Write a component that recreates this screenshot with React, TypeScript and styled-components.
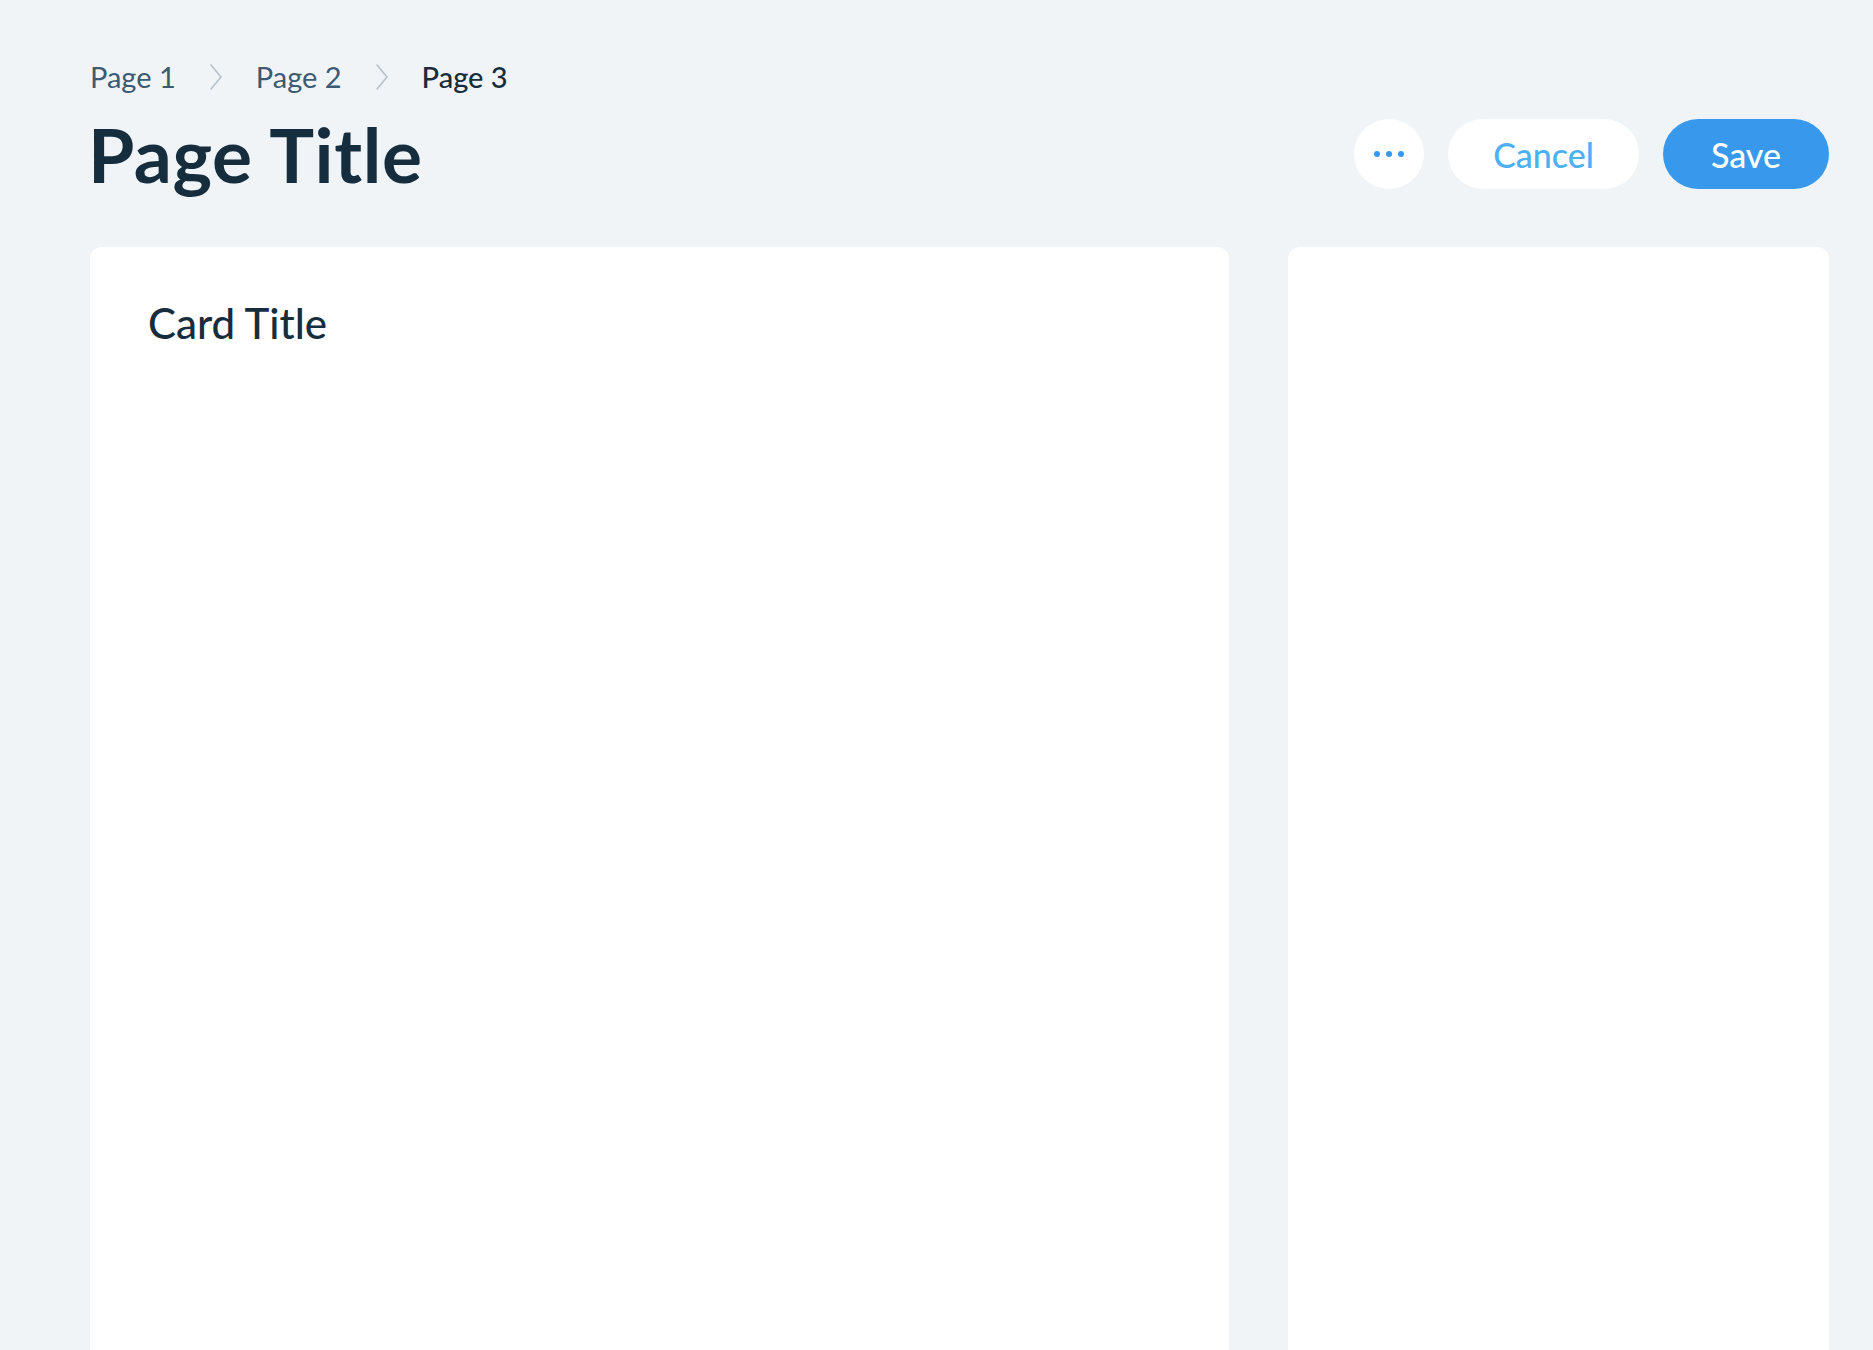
import React from "react";
import styled, { createGlobalStyle } from "styled-components";

const GlobalStyle = createGlobalStyle`
  html, body {
    margin: 0;
    padding: 0;
    background: #f0f4f7;
    overflow: hidden;
  }
  * { box-sizing: border-box; }
`;

const Page = styled.div`
  height: 100vh;
  overflow: hidden;
  padding: 59px 44px 0 90px;
  font-family: Lato, "Liberation Sans", sans-serif;
  color: #162d3d;
  display: flex;
  flex-direction: column;
`;

const Breadcrumbs = styled.nav`
  display: flex;
  align-items: center;
  gap: 34px;
  height: 35px;
`;

const Crumb = styled.span<{ $active?: boolean }>`
  font-size: 29px;
  line-height: 35px;
  color: ${(p) => (p.$active ? "#162d3d" : "#3b5a73")};
  font-weight: ${(p) => (p.$active ? 500 : 400)};
`;

const Header = styled.header`
  margin-top: 25px;
  height: 70px;
  display: flex;
  align-items: center;
  justify-content: space-between;
`;

const Title = styled.h1`
  margin: 0;
  font-size: 75px;
  line-height: 70px;
  font-weight: 700;
  letter-spacing: 0.6px;
  color: #162d3d;
  margin-left: -2px;
`;

const Actions = styled.div`
  display: flex;
  align-items: center;
  gap: 24px;
`;

const IconButton = styled.button`
  width: 70px;
  height: 70px;
  border-radius: 50%;
  border: none;
  background: #ffffff;
  display: flex;
  align-items: center;
  justify-content: center;
  padding: 0;
  cursor: pointer;
`;

const PillButton = styled.button<{ $primary?: boolean }>`
  height: 70px;
  border-radius: 35px;
  border: none;
  padding: 0 ${(p) => (p.$primary ? 48 : 45)}px;
  font-family: Lato, "Liberation Sans", sans-serif;
  font-size: 34px;
  font-weight: 500;
  background: ${(p) => (p.$primary ? "#3899ec" : "#ffffff")};
  color: ${(p) => (p.$primary ? "#ffffff" : "#4eb0f2")};
  cursor: pointer;
`;

const Cards = styled.div`
  margin-top: 58px;
  display: grid;
  grid-template-columns: 1139px 541px;
  column-gap: 59px;
  flex: 1;
  min-height: 1200px;
`;

const Card = styled.section`
  background: #ffffff;
  border-radius: 12px;
  padding: 52px 58px;
`;

const CardTitle = styled.h2`
  margin: 0;
  font-size: 42px;
  line-height: 48px;
  font-weight: 500;
  color: #162d3d;
`;

const Chevron = () => (
  <svg width="12" height="26" viewBox="0 0 12 26" fill="none">
    <path d="M1 1 L11 13 L1 25" stroke="#b6c1cd" strokeWidth="1.6" strokeLinecap="round" strokeLinejoin="round" />
  </svg>
);

const Dots = () => (
  <svg width="32" height="8" viewBox="0 0 32 8">
    <circle cx="4" cy="4" r="3" fill="#3899ec" />
    <circle cx="16" cy="4" r="3" fill="#3899ec" />
    <circle cx="28" cy="4" r="3" fill="#3899ec" />
  </svg>
);

export default function App() {
  return (
    <>
      <GlobalStyle />
      <Page>
        <Breadcrumbs>
          <Crumb>Page 1</Crumb>
          <Chevron />
          <Crumb>Page 2</Crumb>
          <Chevron />
          <Crumb $active>Page 3</Crumb>
        </Breadcrumbs>
        <Header>
          <Title>Page Title</Title>
          <Actions>
            <IconButton aria-label="More actions">
              <Dots />
            </IconButton>
            <PillButton>Cancel</PillButton>
            <PillButton $primary>Save</PillButton>
          </Actions>
        </Header>
        <Cards>
          <Card>
            <CardTitle>Card Title</CardTitle>
          </Card>
          <Card />
        </Cards>
      </Page>
    </>
  );
}
